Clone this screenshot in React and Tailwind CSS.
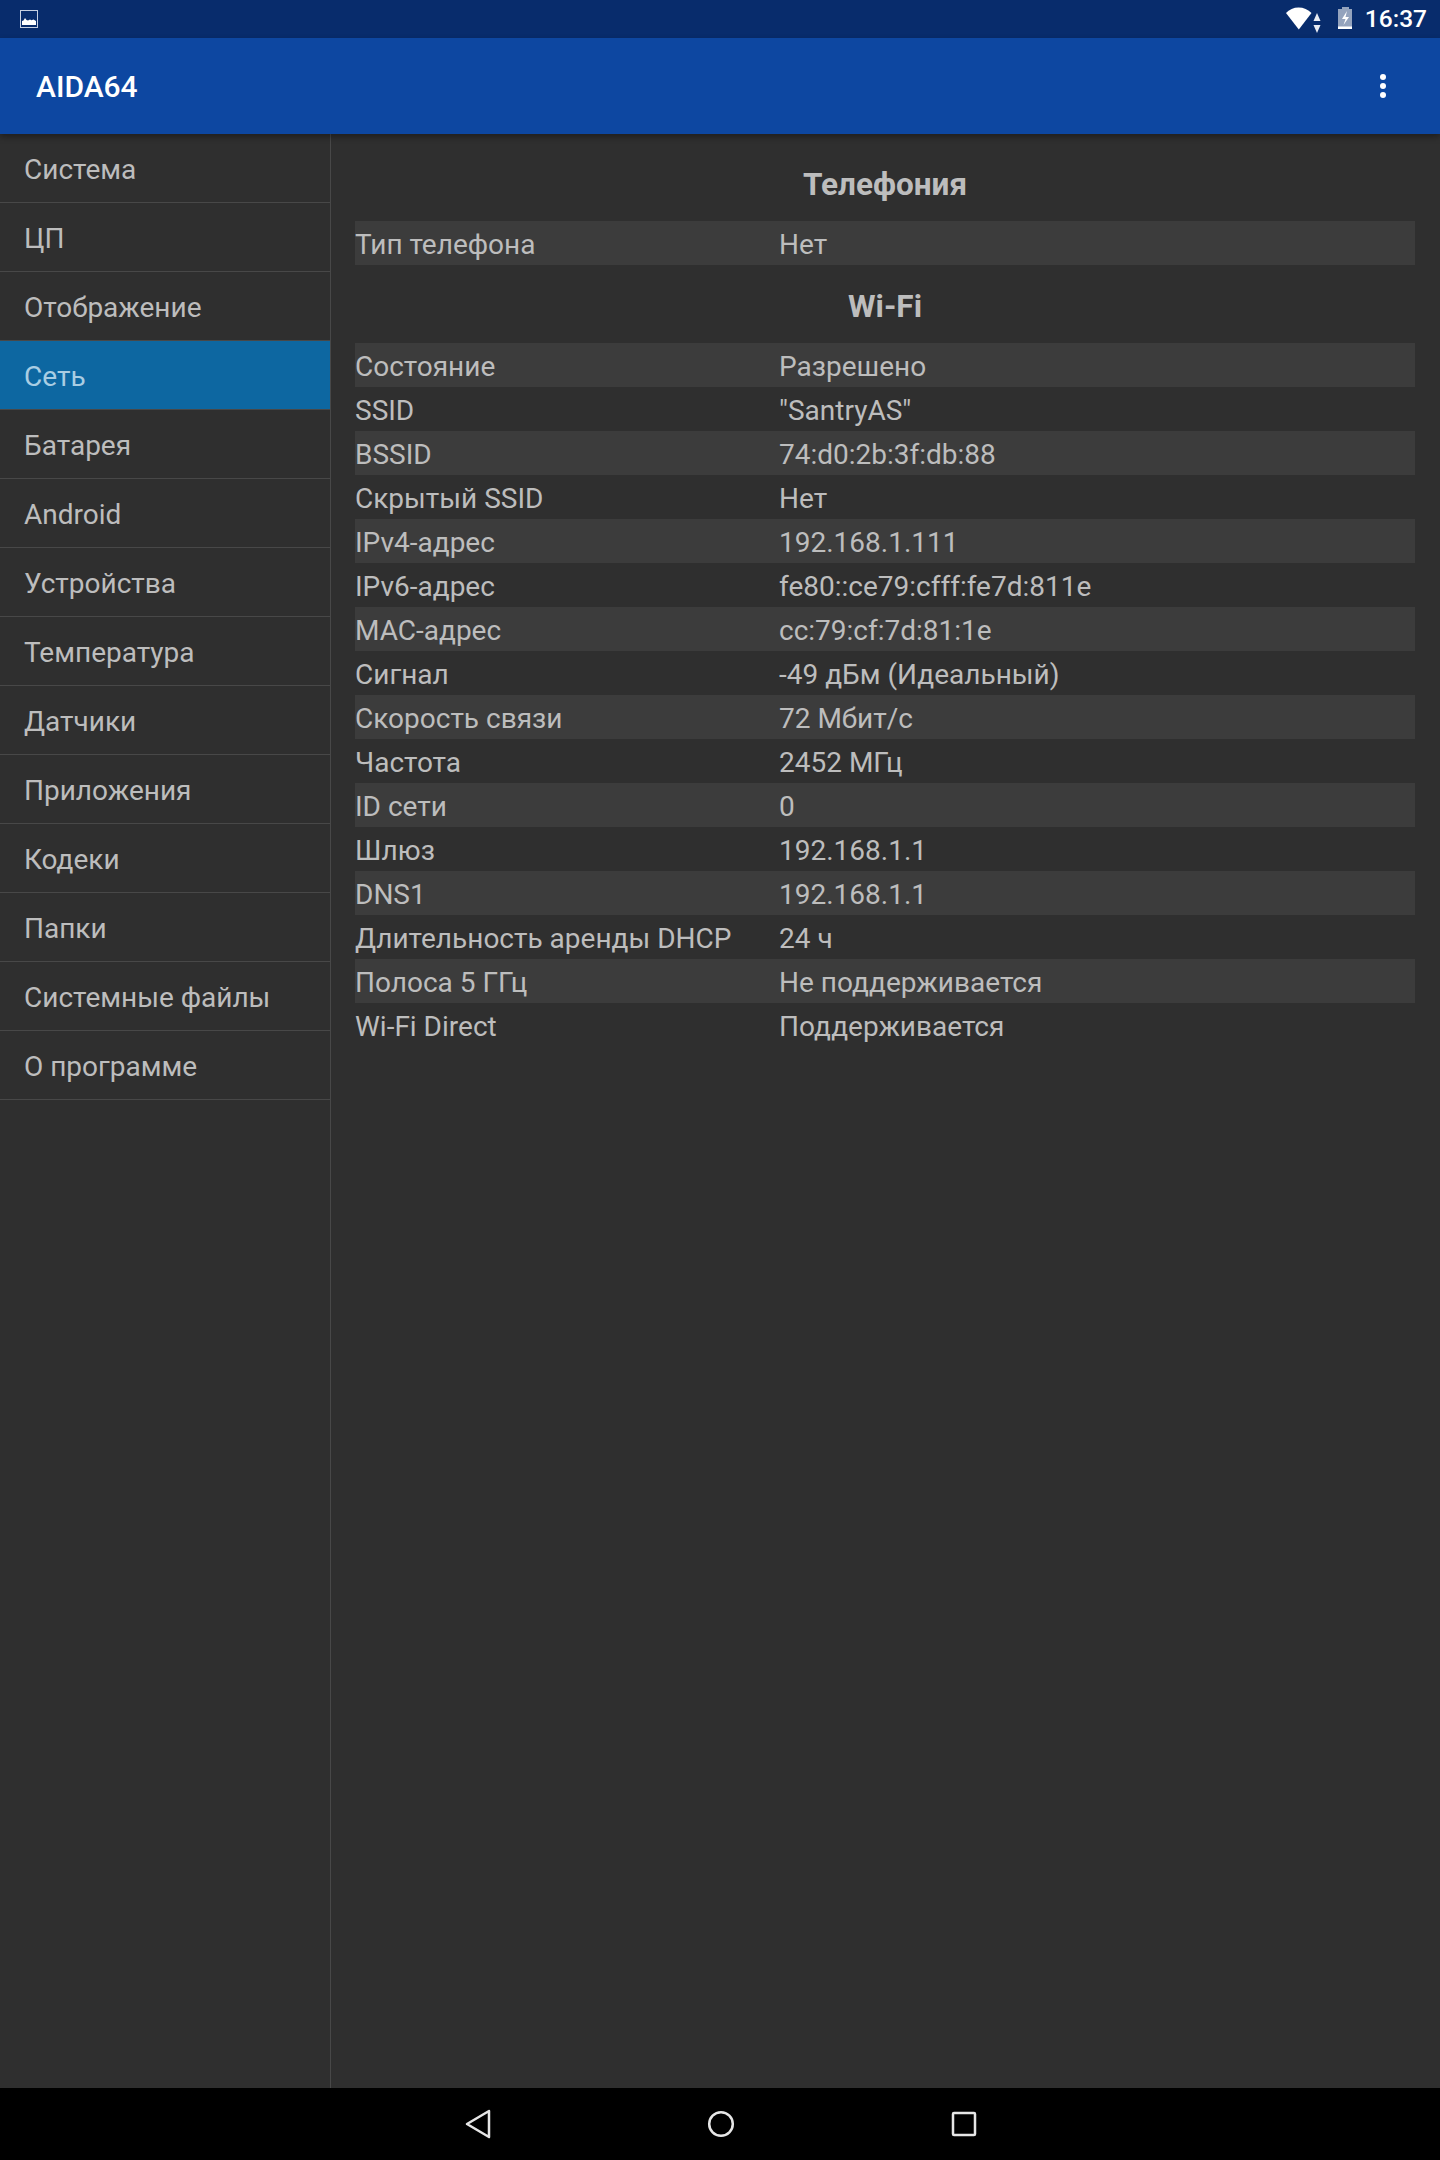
const nav = ["Система","ЦП","Отображение","Сеть","Батарея","Android","Устройства","Температура","Датчики","Приложения","Кодеки","Папки","Системные файлы","О программе"];
const wifi = [
  ["Состояние","Разрешено"],["SSID","\"SantryAS\""],["BSSID","74:d0:2b:3f:db:88"],["Скрытый SSID","Нет"],
  ["IPv4-адрес","192.168.1.111"],["IPv6-адрес","fe80::ce79:cfff:fe7d:811e"],["MAC-адрес","cc:79:cf:7d:81:1e"],
  ["Сигнал","-49 дБм (Идеальный)"],["Скорость связи","72 Мбит/с"],["Частота","2452 МГц"],["ID сети","0"],
  ["Шлюз","192.168.1.1"],["DNS1","192.168.1.1"],["Длительность аренды DHCP","24 ч"],["Полоса 5 ГГц","Не поддерживается"],["Wi-Fi Direct","Поддерживается"],
];
function Row({ label, value, shaded }) {
  return (
    <div className={"flex h-[44px] items-center pt-[4px] text-[28px] " + (shaded ? "bg-[#3c3c3c]" : "")}>
      <span className="w-[424px] shrink-0 whitespace-nowrap">{label}</span>
      <span className="whitespace-nowrap">{value}</span>
    </div>
  );
}
export default function App() {
  return (
    <div className="flex h-[2160px] w-[1440px] flex-col overflow-hidden bg-[#2f2f2f] text-[#bdbdbd] font-['Roboto',sans-serif]">
      <div className="flex h-[38px] shrink-0 items-center justify-between bg-[#082c6c] pl-[20px] pr-[13px]">
        <svg width="18" height="18" viewBox="0 0 18 18">
          <rect x="0.5" y="0.5" width="17" height="17" fill="none" stroke="#c6d0e2" strokeWidth="1" />
          <path d="M2 15v-4l1.500-.5L5 8l1.500 2 1.500.5 2-1 1.500.8 2-.8 2.500 1.500V15z" fill="#fff" />
        </svg>
        <div className="flex items-center">
          <svg width="26" height="38" viewBox="0 0 26 38"><path d="M0 13C6 5.500 19 5.500 25.500 13L12.800 29.500z" fill="#fff" /></svg>
          <svg width="8" height="38" viewBox="0 0 8 38" className="ml-[1px]"><path d="M4 13l3.500 8H.5zM.5 25h7L4 33z" fill="#e8ecf3" /></svg>
          <svg width="15" height="38" viewBox="0 0 15 38" className="ml-[17px]">
            <path d="M4 7h7v2h3v20H0V9h4z" fill="#94a3bd" />
            <rect x="0" y="26.500" width="14" height="2.500" fill="#fff" />
            <path d="M9 11L4 19h3.500L5.500 25 11 17H7.500z" fill="#fff" />
          </svg>
          <span className="ml-[12px] text-[24.5px] leading-none font-medium text-white">16:37</span>
        </div>
      </div>
      <header className="z-10 flex h-[96px] shrink-0 items-center justify-between bg-[#0d47a1] pl-[36px] pr-[54px] shadow-[0_3px_6px_rgba(0,0,0,0.35)]">
        <span className="text-[30px] font-medium text-white">AIDA64</span>
        <svg width="6" height="24" viewBox="0 0 6 24"><circle cx="3" cy="3" r="3" fill="#fff" /><circle cx="3" cy="12" r="3" fill="#fff" /><circle cx="3" cy="21" r="3" fill="#fff" /></svg>
      </header>
      <main className="flex min-h-0 flex-1">
        <aside className="w-[331px] shrink-0 border-r border-[#484848]">
          {nav.map((n) => (
            <div key={n} className={"flex h-[69px] items-center border-b border-[#484848] pl-[24px] pt-[4px] text-[28px] " + (n === "Сеть" ? "bg-[#0d67a1] text-[#a9cde3]" : "")}>{n}</div>
          ))}
        </aside>
        <section className="flex-1 pl-[24px] pr-[25px]">
          <h2 className="flex h-[87px] items-center justify-center pt-[14px] text-[31.500px] font-bold">Телефония</h2>
          <Row label="Тип телефона" value="Нет" shaded />
          <h2 className="flex h-[78px] items-center justify-center pt-[5px] text-[31.500px] font-bold">Wi-Fi</h2>
          {wifi.map((r, i) => <Row key={r[0]} label={r[0]} value={r[1]} shaded={i % 2 === 0} />)}
        </section>
      </main>
      <footer className="relative flex h-[72px] shrink-0 items-center bg-black pl-[465px]">
        <svg width="26" height="30" viewBox="0 0 26 30"><path d="M24 2L2 15l22 13z" fill="none" stroke="#e6e6e6" strokeWidth="2.500" strokeLinejoin="round" /></svg>
        <svg width="28" height="28" viewBox="0 0 28 28" className="ml-[216px]"><circle cx="14" cy="14" r="11.800" fill="none" stroke="#e6e6e6" strokeWidth="2.500" /></svg>
        <svg width="26" height="26" viewBox="0 0 26 26" className="ml-[216px]"><rect x="2" y="2" width="22" height="22" rx="1" fill="none" stroke="#e6e6e6" strokeWidth="2.500" /></svg>
      </footer>
    </div>
  );
}
